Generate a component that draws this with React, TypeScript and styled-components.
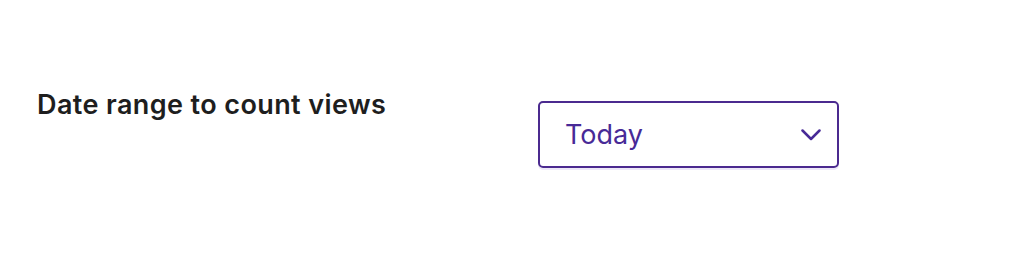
import React from "react";
import styled, { createGlobalStyle } from "styled-components";

const Global = createGlobalStyle`
  html, body { margin: 0; padding: 0; background: #fff; }
  body { font-family: Inter, "Noto Sans", sans-serif; }
`;

const Page = styled.div`
  width: 1014px;
  height: 258px;
  box-sizing: border-box;
  padding: 89px 0 0 37px;
  display: flex;
  align-items: flex-start;
`;

const Label = styled.label`
  width: 501px;
  font-size: 27px;
  font-weight: 600;
  letter-spacing: 0.4px;
  color: #1e1e1e;
  line-height: 32px;
`;

const SelectBox = styled.div`
  margin-top: 12px;
  width: 301px;
  height: 67px;
  box-sizing: border-box;
  border: 2px solid #4b2a8f;
  border-radius: 5px;
  box-shadow: 0 2px 0 #ede8f8;
  display: flex;
  align-items: center;
  justify-content: space-between;
  padding: 0 16px 0 25px;
  color: #482a97;
  font-size: 27px;
  font-weight: 400;
`;

const Chevron = () => (
  <svg width="20" height="12" viewBox="0 0 20 12" fill="none">
    <path d="M1.5 1.5l8.5 8.5 8.5-8.5" stroke="#482a97" strokeWidth="2.5" strokeLinecap="round" strokeLinejoin="round" />
  </svg>
);

export default function App() {
  return (
    <>
      <Global />
      <Page>
        <Label>Date range to count views</Label>
        <SelectBox>
          <span>Today</span>
          <Chevron />
        </SelectBox>
      </Page>
    </>
  );
}
